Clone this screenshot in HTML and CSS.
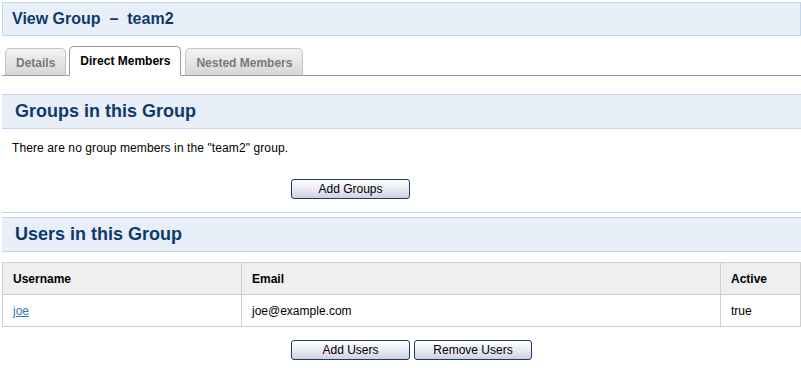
FILE: index.html
```html
<!DOCTYPE html>
<html lang="en">
<head>
    <meta charset="UTF-8">
    <title>View Group - team2</title>
    <link rel="stylesheet" href="styles.css">
</head>
<body>
    <div class="page">
        <h1 class="page-title">View Group &nbsp;&ndash;&nbsp; team2</h1>

        <ul class="tabs">
            <li class="tab">Details</li>
            <li class="tab active">Direct Members</li>
            <li class="tab">Nested Members</li>
        </ul>

        <div class="section groups">
            <h2 class="section-title">Groups in this Group</h2>
            <p class="empty">There are no group members in the "team2" group.</p>
            <div class="actions">
                <button class="btn wide">Add Groups</button>
            </div>
        </div>

        <div class="section users">
            <h2 class="section-title">Users in this Group</h2>
            <table class="members">
                <thead>
                    <tr>
                        <th class="col-user">Username</th>
                        <th class="col-email">Email</th>
                        <th class="col-active">Active</th>
                    </tr>
                </thead>
                <tbody>
                    <tr>
                        <td><a href="#">joe</a></td>
                        <td>joe@example.com</td>
                        <td>true</td>
                    </tr>
                </tbody>
            </table>
            <div class="actions">
                <button class="btn wide">Add Users</button>
                <button class="btn">Remove Users</button>
            </div>
        </div>
    </div>
</body>
</html>
```

FILE: styles.css
```css
* {
    margin: 0;
    padding: 0;
    box-sizing: border-box;
}

body {
    font-family: 'Liberation Sans', Arial, sans-serif;
    font-size: 12px;
    color: #000;
    background: #fff;
    padding: 2px 0 0 2px;
}

.page {
    width: 799px;
}

.page-title {
    height: 34px;
    background: #e9eff8;
    border: 1px solid #c3d5ea;
    color: #0e3a6b;
    font-size: 16px;
    font-weight: bold;
    line-height: 32px;
    padding-left: 9px;
}

/* tabs */
.tabs {
    list-style: none;
    display: flex;
    align-items: flex-end;
    gap: 3px;
    margin-top: 11px;
    padding-left: 3px;
    height: 29px;
    border-bottom: 1px solid #9a9a9a;
}

.tab {
    height: 28px;
    margin-bottom: -1px;
    padding: 0 10px;
    line-height: 29px;
    font-weight: bold;
    color: #7a7a7a;
    background: linear-gradient(#f3f3f3, #d6d6d6);
    border: 1px solid #c4c4c4;
    border-bottom-color: #9a9a9a;
    border-radius: 5px 5px 0 0;
}

.tab.active {
    height: 30px;
    color: #000;
    background: #fff;
    border-color: #9a9a9a;
    border-bottom-color: #fff;
    margin-right: 1px;
}

/* sections */
.section-title {
    height: 35px;
    background: #e9eff8;
    border-top: 1px solid #c3d5ea;
    border-bottom: 1px solid #c3d5ea;
    color: #0e3a6b;
    font-size: 18px;
    font-weight: bold;
    line-height: 33px;
    padding-left: 13px;
}

.groups {
    margin-top: 18px;
    border-bottom: 1px solid #c3d5ea;
    padding-bottom: 13px;
}

.empty {
    padding: 12px 0 0 10px;
    line-height: 14px;
    letter-spacing: 0.1px;
}

.groups .actions {
    margin-top: 24px;
}

.users {
    margin-top: 4px;
}

.actions {
    display: flex;
    gap: 4px;
    padding-left: 289px;
}

.btn {
    width: 118px;
    height: 20px;
    font-family: inherit;
    font-size: 12px;
    color: #000;
    background: linear-gradient(#ffffff, #e6e6f0 60%, #cfcfe0);
    border: 1px solid #1d3d68;
    border-radius: 3px;
}

.btn.wide {
    width: 119px;
}

/* table */
.members {
    width: 100%;
    border-collapse: collapse;
    margin-top: 10px;
    margin-bottom: 13px;
}

.members th,
.members td {
    height: 32px;
    border: 1px solid #cfcfcf;
    text-align: left;
    padding: 0 10px;
    font-size: 12px;
}

.members th {
    background: #efefef;
    font-weight: bold;
}

.col-user {
    width: 239px;
}

.col-active {
    width: 80px;
}

.members a {
    color: #3a72b8;
}
```
